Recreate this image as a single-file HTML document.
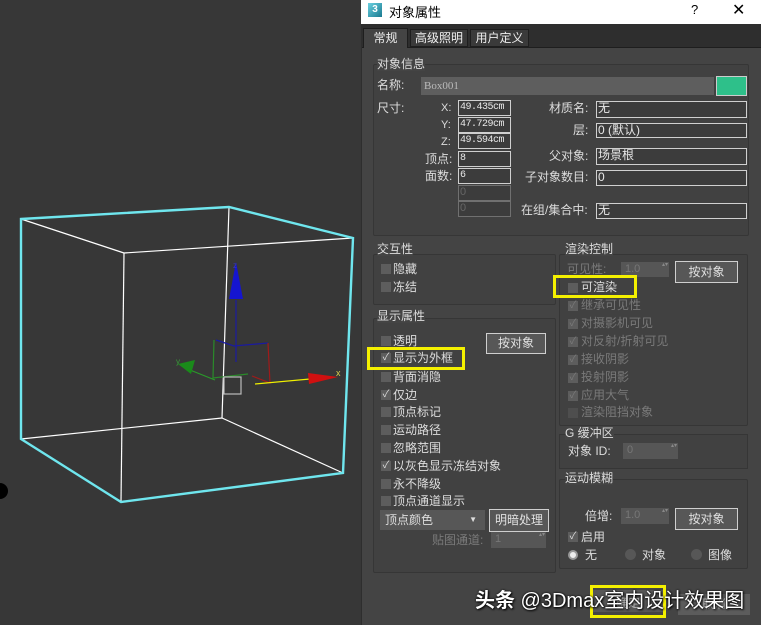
<!DOCTYPE html>
<html><head><meta charset="utf-8"><style>
*{margin:0;padding:0;box-sizing:border-box}
body{width:761px;height:625px;background:#373737;position:relative;overflow:hidden;font-family:"Liberation Sans","Noto Sans CJK SC",sans-serif;font-size:12px;color:#ddd}
.a{position:absolute;white-space:nowrap}
.grp{position:absolute;border:1px solid #363636;background:#414141;border-radius:2px}
.lbl{position:absolute;white-space:nowrap;line-height:14px}
.fld{position:absolute;border:1px solid #d0d0d0;background:#3c3c3c;font-size:10px;line-height:13px;padding-left:1px;color:#e8e8e8;font-family:"Liberation Mono","Noto Sans CJK SC",monospace;overflow:hidden}
.fldd{position:absolute;border:1px solid #707070;background:#3c3c3c;font-size:11px;line-height:13px;color:#666;padding-left:1px}
.cb{position:absolute;width:10px;height:10px;background:#5d5d5d}
.cbk{position:absolute;width:10px;height:10px;background:#5d5d5d;color:#ddd;font-size:10px;line-height:10px;text-align:center}
.btn{position:absolute;border:1px solid #cfcfcf;background:#575757;text-align:center;color:#e0e0e0}
.dim{color:#7a7a7a}
.spin{position:absolute;background:#565656;color:#777;font-size:11px;padding-left:4px;line-height:14px}
.spin:after{content:"▴▾";position:absolute;right:2px;top:0;font-size:6px;line-height:7px;width:5px;white-space:normal;color:#888}
.yb{position:absolute;border:3px solid #f4f000}
</style></head><body>
<svg class="a" style="left:0;top:0" width="361" height="625">
<circle cx="0" cy="491" r="8" fill="#000"/>
<g stroke="#fff" stroke-width="1.2" fill="none">
<line x1="21" y1="219" x2="124" y2="253"/><line x1="124" y1="253" x2="353" y2="238"/><line x1="124" y1="253" x2="121" y2="502"/>
<line x1="229" y1="207" x2="222" y2="418"/><line x1="222" y1="418" x2="21" y2="439"/><line x1="222" y1="418" x2="343" y2="473"/>
</g>
<polygon points="21,219 229,207 353,238 343,473 121,502 21,439" stroke="#6fe6ee" stroke-width="2.4" fill="none"/>
<g fill="none" stroke-width="1.2">
<line x1="236" y1="362" x2="236" y2="300" stroke="#1a1aa0"/>
<polyline points="216,340 234,346 268,343" stroke="#1a1aa0"/>
<polyline points="214,340 213,378 248,374" stroke="#2a8a2a"/>
<polyline points="268,343 270,383 252,376" stroke="#a01a1a"/>
<line x1="190" y1="370" x2="215" y2="380" stroke="#2a9a2a"/>
<line x1="255" y1="384" x2="310" y2="379" stroke="#f0f000"/>
<rect x="224" y="377" width="17" height="17" stroke="#bbb"/>
</g>
<polygon points="236,262 229,299 243,299" fill="#1515d0"/>
<polygon points="178,364 195,360 191,374" fill="#1a8a1a"/>
<polygon points="338,377 308,373 309,384" fill="#d01010"/>
<text x="233" y="268" fill="#3333cc" font-size="8">z</text>
<text x="176" y="364" fill="#3a9a3a" font-size="8">y</text>
<text x="336" y="376" fill="#d8d04a" font-size="9">x</text>
</svg>

<div class="a" style="left:361px;top:0;width:400px;height:625px;background:#2e2e2e"></div>
<div class="a" style="left:361px;top:0;width:400px;height:24px;background:#fff"></div>
<div class="a" style="left:368px;top:3px;width:14px;height:14px;background:linear-gradient(135deg,#6ad0e0,#1a7a90);color:#fff;font-size:10px;font-weight:bold;text-align:center;line-height:14px">3</div>
<div class="a" style="left:389px;top:2px;color:#000;font-size:13px">对象属性</div>
<div class="a" style="left:691px;top:2px;color:#000;font-size:13px">?</div>
<div class="a" style="left:732px;top:0px;color:#000;font-size:16px">✕</div>

<div class="a" style="left:362px;top:47px;width:399px;height:578px;background:#444;border-top:1px solid #1e1e1e"></div>
<div class="a" style="left:363px;top:28px;width:45px;height:20px;background:#444;border:1px solid #1e1e1e;border-bottom:none;text-align:center;line-height:19px;color:#eee">常规</div>
<div class="a" style="left:410px;top:29px;width:58px;height:18px;background:#3a3a3a;border:1px solid #1e1e1e;text-align:center;line-height:17px;color:#eee">高级照明</div>
<div class="a" style="left:470px;top:29px;width:59px;height:18px;background:#3a3a3a;border:1px solid #1e1e1e;text-align:center;line-height:17px;color:#eee">用户定义</div>

<div class="grp" style="left:373px;top:64px;width:376px;height:172px"></div>
<div class="lbl" style="left:377px;top:57px;background:#444">对象信息</div>
<div class="lbl" style="left:377px;top:78px">名称:</div>
<div class="a" style="left:421px;top:77px;width:293px;height:18px;background:#5e5e5e;color:#bbb;font-family:'Liberation Serif',serif;font-size:11px;line-height:18px;padding-left:3px">Box001</div>
<div class="a" style="left:716px;top:76px;width:31px;height:20px;background:#2ec08a;border:1px solid #ccc"></div>
<div class="lbl" style="left:377px;top:101px">尺寸:</div>
<div class="lbl" style="left:441px;top:101px;font-size:11px">X:</div>
<div class="lbl" style="left:441px;top:118px;font-size:11px">Y:</div>
<div class="lbl" style="left:441px;top:135px;font-size:11px">Z:</div>
<div class="fld" style="left:458px;top:100px;width:53px;height:16px;letter-spacing:-0.5px">49.435cm</div>
<div class="fld" style="left:458px;top:117px;width:53px;height:16px;letter-spacing:-0.5px">47.729cm</div>
<div class="fld" style="left:458px;top:133px;width:53px;height:16px;letter-spacing:-0.5px">49.594cm</div>
<div class="lbl" style="left:425px;top:152px">顶点:</div>
<div class="lbl" style="left:425px;top:169px">面数:</div>
<div class="fld" style="left:458px;top:151px;width:53px;height:16px">8</div>
<div class="fld" style="left:458px;top:168px;width:53px;height:16px">6</div>
<div class="fldd" style="left:458px;top:185px;width:53px;height:16px">0</div>
<div class="fldd" style="left:458px;top:201px;width:53px;height:16px">0</div>
<div class="lbl" style="left:549px;top:101px">材质名:</div>
<div class="lbl" style="left:573px;top:123px">层:</div>
<div class="lbl" style="left:549px;top:149px">父对象:</div>
<div class="lbl" style="left:525px;top:170px">子对象数目:</div>
<div class="lbl" style="left:521px;top:203px">在组/集合中:</div>
<div class="fld" style="left:596px;top:101px;width:151px;height:17px;font-size:12px;font-family:'Liberation Sans','Noto Sans CJK SC',sans-serif">无</div>
<div class="fld" style="left:596px;top:123px;width:151px;height:15px;font-size:12px;font-family:'Liberation Sans','Noto Sans CJK SC',sans-serif">0 (默认)</div>
<div class="fld" style="left:596px;top:148px;width:151px;height:17px;font-size:12px;font-family:'Liberation Sans','Noto Sans CJK SC',sans-serif">场景根</div>
<div class="fld" style="left:596px;top:170px;width:151px;height:16px;font-size:12px;font-family:'Liberation Sans','Noto Sans CJK SC',sans-serif">0</div>
<div class="fld" style="left:596px;top:203px;width:151px;height:16px;font-size:12px;font-family:'Liberation Sans','Noto Sans CJK SC',sans-serif">无</div>

<div class="grp" style="left:373px;top:254px;width:183px;height:51px"></div>
<div class="lbl" style="left:377px;top:242px;background:#444">交互性</div>
<div class="cb" style="left:381px;top:264px"></div><div class="lbl" style="left:393px;top:262px">隐藏</div>
<div class="cb" style="left:381px;top:282px"></div><div class="lbl" style="left:393px;top:280px">冻结</div>

<div class="grp" style="left:373px;top:318px;width:183px;height:255px"></div>
<div class="lbl" style="left:377px;top:309px;background:#444">显示属性</div>
<div class="cb" style="left:381px;top:336px"></div><div class="lbl" style="left:393px;top:334px">透明</div>
<div class="cbk" style="left:381px;top:353px">✓</div><div class="lbl" style="left:393px;top:351px">显示为外框</div>
<div class="cb" style="left:381px;top:372px"></div><div class="lbl" style="left:393px;top:370px">背面消隐</div>
<div class="cbk" style="left:381px;top:390px">✓</div><div class="lbl" style="left:393px;top:388px">仅边</div>
<div class="cb" style="left:381px;top:407px"></div><div class="lbl" style="left:393px;top:405px">顶点标记</div>
<div class="cb" style="left:381px;top:425px"></div><div class="lbl" style="left:393px;top:423px">运动路径</div>
<div class="cb" style="left:381px;top:443px"></div><div class="lbl" style="left:393px;top:441px">忽略范围</div>
<div class="cbk" style="left:381px;top:461px">✓</div><div class="lbl" style="left:393px;top:459px">以灰色显示冻结对象</div>
<div class="cb" style="left:381px;top:479px"></div><div class="lbl" style="left:393px;top:477px">永不降级</div>
<div class="cb" style="left:381px;top:496px"></div><div class="lbl" style="left:393px;top:494px">顶点通道显示</div>
<div class="btn" style="left:486px;top:333px;width:60px;height:21px;line-height:19px">按对象</div>
<div class="a" style="left:380px;top:510px;width:105px;height:20px;background:#575757;line-height:20px;padding-left:5px">顶点颜色<span style="position:absolute;right:8px;font-size:8px">▼</span></div>
<div class="btn" style="left:489px;top:509px;width:60px;height:23px;line-height:21px">明暗处理</div>
<div class="lbl dim" style="left:432px;top:533px">贴图通道:</div>
<div class="spin" style="left:491px;top:532px;width:55px;height:16px">1</div>
<div class="yb" style="left:367px;top:347px;width:98px;height:23px"></div>

<div class="grp" style="left:559px;top:254px;width:189px;height:172px"></div>
<div class="lbl" style="left:565px;top:242px;background:#444">渲染控制</div>
<div class="lbl dim" style="left:567px;top:262px">可见性:</div>
<div class="spin" style="left:621px;top:262px;width:48px;height:15px">1.0</div>
<div class="btn" style="left:675px;top:261px;width:63px;height:22px;line-height:20px">按对象</div>
<div class="cb" style="left:568px;top:283px"></div><div class="lbl" style="left:581px;top:280px">可渲染</div>
<div class="yb" style="left:553px;top:275px;width:84px;height:23px"></div>
<div class="cbk dim" style="left:568px;top:301px">✓</div><div class="lbl dim" style="left:581px;top:298px">继承可见性</div>
<div class="cbk dim" style="left:568px;top:319px">✓</div><div class="lbl dim" style="left:581px;top:316px">对摄影机可见</div>
<div class="cbk dim" style="left:568px;top:337px">✓</div><div class="lbl dim" style="left:581px;top:334px">对反射/折射可见</div>
<div class="cbk dim" style="left:568px;top:355px">✓</div><div class="lbl dim" style="left:581px;top:352px">接收阴影</div>
<div class="cbk dim" style="left:568px;top:373px">✓</div><div class="lbl dim" style="left:581px;top:370px">投射阴影</div>
<div class="cbk dim" style="left:568px;top:391px">✓</div><div class="lbl dim" style="left:581px;top:388px">应用大气</div>
<div class="cb" style="left:568px;top:408px;background:#4e4e4e"></div><div class="lbl dim" style="left:581px;top:405px">渲染阻挡对象</div>
<div class="a" style="left:559px;top:434px;width:189px;height:35px;border:1px solid #363636;background:#414141"></div>
<div class="lbl" style="left:565px;top:426px;background:#444">G 缓冲区</div>
<div class="lbl" style="left:568px;top:444px">对象 ID:</div>
<div class="spin" style="left:623px;top:443px;width:55px;height:16px">0</div>

<div class="grp" style="left:559px;top:479px;width:189px;height:90px"></div>
<div class="lbl" style="left:565px;top:471px;background:#444">运动模糊</div>
<div class="lbl" style="left:585px;top:509px">倍增:</div>
<div class="spin" style="left:621px;top:508px;width:48px;height:16px">1.0</div>
<div class="btn" style="left:675px;top:508px;width:63px;height:22px;line-height:20px">按对象</div>
<div class="cbk" style="left:568px;top:532px">✓</div><div class="lbl" style="left:581px;top:530px">启用</div>
<div class="a" style="left:568px;top:550px;width:10px;height:10px;border-radius:50%;background:#eee;border:2px solid #999"></div><div class="lbl" style="left:585px;top:548px">无</div>
<div class="a" style="left:625px;top:549px;width:11px;height:11px;border-radius:50%;background:#575757"></div><div class="lbl" style="left:642px;top:548px">对象</div>
<div class="a" style="left:691px;top:549px;width:11px;height:11px;border-radius:50%;background:#575757"></div><div class="lbl" style="left:708px;top:548px">图像</div>

<div class="a" style="left:593px;top:590px;width:70px;height:22px;background:#575757;text-align:center;line-height:26px;color:#bbb">确定</div>
<div class="a" style="left:678px;top:594px;width:72px;height:21px;background:#5c5c5c;text-align:center;line-height:21px;color:#bbb">取消</div>
<div class="yb" style="left:590px;top:585px;width:76px;height:33px"></div>
<div class="a" style="left:475px;top:584px;font-size:20px;color:#fff;text-shadow:1px 1px 2px #000,0 0 2px #000;font-family:'Liberation Sans','Noto Sans CJK SC',sans-serif"><b>头条</b> @3Dmax室内设计效果图</div>
</body></html>
